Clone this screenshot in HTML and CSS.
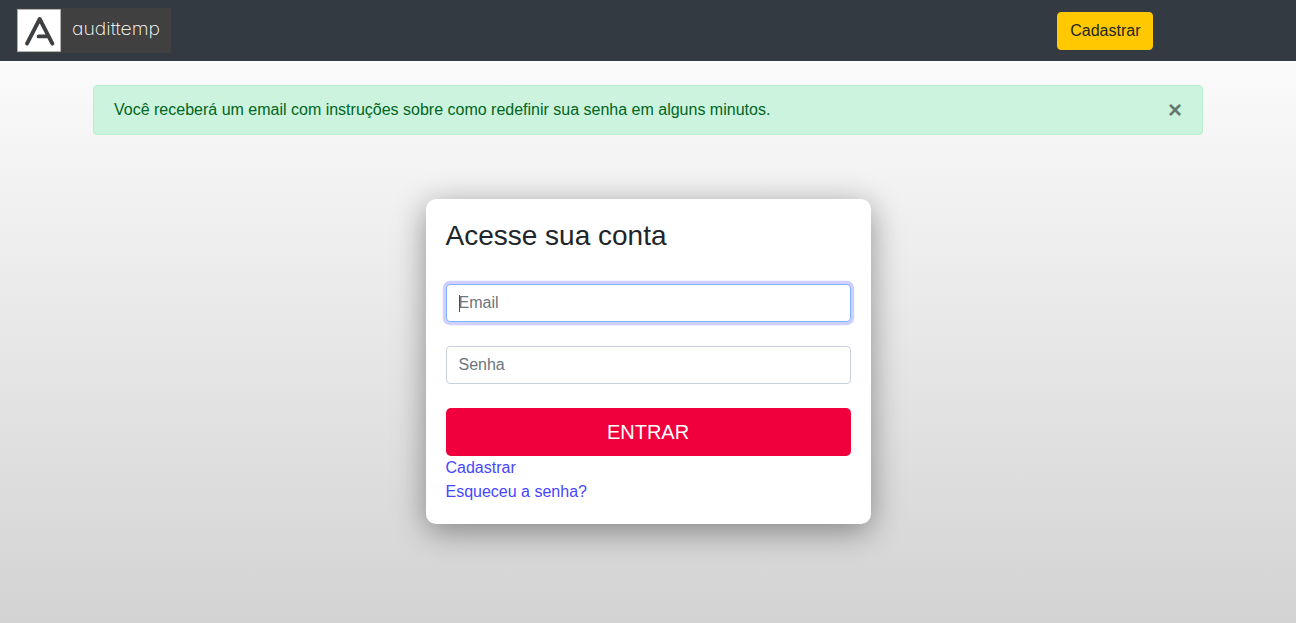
FILE: index.html
```html
<!DOCTYPE html>
<html lang="pt-BR">
<head>
<meta charset="utf-8">
<title>audittemp</title>
<link rel="stylesheet" href="styles.css">
</head>
<body>
<header class="navbar">
  <a class="brand" href="#" aria-label="audittemp">
    <svg class="brand-mark" viewBox="0 0 44 43" width="44" height="43" fill="none" stroke="#3f4042" stroke-width="3.9" stroke-linecap="round" stroke-linejoin="round">
      <rect x=".5" y=".5" width="43" height="42" fill="#fff" stroke="#b0b1b2" stroke-width="1"/>
      <path d="M10 34.6 22.7 10 35.4 34.6M21.6 27.4h9.4" />
    </svg>
    <svg class="brand-name" viewBox="0 0 100 45" width="100" height="45"><text x="0" y="26.7" textLength="88" lengthAdjust="spacingAndGlyphs">audittemp</text></svg>
  </a>
  <a class="btn btn-warning" href="#">Cadastrar</a>
</header>
<main>
  <div class="container">
    <div class="alert" role="alert">
      <span>Você receberá um email com instruções sobre como redefinir sua senha em alguns minutos.</span>
      <button class="close" type="button" aria-label="Fechar">×</button>
    </div>
  </div>
  <form class="card">
    <h1 class="card-title">Acesse sua conta</h1>
    <div class="field field-active"><input class="input" type="email" placeholder="Email"></div>
    <div class="field"><input class="input" type="password" placeholder="Senha"></div>
    <button class="btn-submit" type="button">ENTRAR</button>
    <a class="link" href="#">Cadastrar</a>
    <a class="link" href="#">Esqueceu a senha?</a>
  </form>
</main>
</body>
</html>
```
FILE: styles.css
```css
* { box-sizing: border-box; }
body {
  margin: 0;
  min-height: 100vh;
  font: 16px/24px "Liberation Sans", Arial, sans-serif;
  color: #212529;
  background: linear-gradient(#fff, #d3d3d3);
}
a { text-decoration: none; }
.navbar {
  display: flex;
  align-items: center;
  justify-content: space-between;
  height: 61px;
  padding: 0 143px 0 17px;
  background: #333a41;
}
.brand {
  display: flex;
  align-items: center;
  width: 154px;
  height: 45px;
  background: #404041;
}
.brand-mark { flex: none; }
.brand-name { flex: none; margin-left: 11px; }
.brand-name text {
  font: 200 17px Inter, sans-serif;
  font-feature-settings: "cv11";
  fill: #fff;
}
.btn {
  padding: 6px 11.5px 6px 12.5px;
  border: 1px solid #ffc800;
  border-radius: 4px;
}
.btn-warning { color: #212529; background: #ffc800; }
.container { width: 1110px; margin: 24px auto 0; }
.alert {
  display: flex;
  justify-content: space-between;
  align-items: center;
  height: 50px;
  padding: 0 20px;
  color: #006622;
  background: #ccf3dd;
  border: 1px solid #b8eecb;
  border-radius: 4px;
}
.close {
  padding: 0;
  border: 0;
  background: none;
  font: bold 24px/24px "Liberation Sans", Arial, sans-serif;
  color: #000;
  opacity: .5;
}
.card {
  display: flex;
  flex-direction: column;
  width: 445px;
  height: 325px;
  margin: 64px auto 0;
  padding: 20px;
  background: #fff;
  border-radius: 10px;
  box-shadow: 0 7px 32px rgba(0, 0, 0, .4);
}
.card-title { margin: 0 0 31px; font-size: 28px; font-weight: 400; line-height: 34px; }
.field { position: relative; height: 38px; margin-bottom: 24px; }
.input {
  display: block;
  width: 100%;
  height: 38px;
  padding: 6px 12px;
  border: 1px solid #c9d0dc;
  border-radius: 4px;
  font: inherit;
  background: #fff;
  outline: none;
}
.input::placeholder { color: #6c757d; opacity: 1; }
.field-active .input { border-color: #80b3ff; box-shadow: 0 0 0 3.2px #d0d0ff; }
.field-active::after {
  content: "";
  position: absolute;
  left: 13px;
  top: 11px;
  width: 1px;
  height: 17px;
  background: #495057;
}
.btn-submit {
  height: 48px;
  padding: 0;
  border: 0;
  border-radius: 5px;
  font: 20px/30px "Liberation Sans", Arial, sans-serif;
  color: #fff;
  background: #f0003c;
}
.link { align-self: flex-start; color: #4646ff; }
```
